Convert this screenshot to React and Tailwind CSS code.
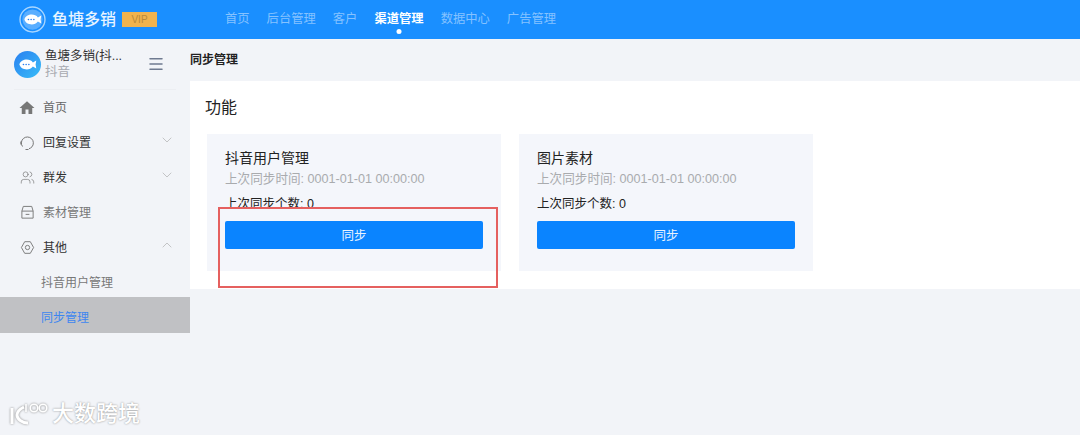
import React from 'react';
import { Users, ChevronDown, ChevronUp, Menu } from 'lucide-react';

const navItems = ['首页', '后台管理', '客户', '渠道管理', '数据中心', '广告管理'];

// small line icons for the side menu
const ReplyIcon = () => (
  <svg width="15" height="16" viewBox="0 0 15 16" fill="none" stroke="#777" strokeWidth="1" className="shrink-0">
    <path d="M2.500 11.500A6 6 0 1 1 12 11.800C11 12.800 10 13.400 9 13.700" />
    <path d="M5.500 14.500h3" />
    <path d="M1 6.500v3" strokeWidth="1.300" />
  </svg>
);

const BoxIcon = () => (
  <svg width="15" height="15" viewBox="0 0 16 16" fill="none" stroke="#777" strokeWidth="1" className="shrink-0">
    <path d="M3.500 1.500h9l1.500 5v7.500H2V6.500z" />
    <path d="M2 6.500h12" />
    <path d="M6 10h4" />
  </svg>
);

const GearIcon = () => (
  <svg width="15" height="15" viewBox="0 0 16 16" fill="none" stroke="#777" strokeWidth="1" className="shrink-0">
    <path d="M5 1.800h6L14.500 8 11 14.200H5L1.500 8z" strokeLinejoin="round" />
    <circle cx="8" cy="8" r="2.300" />
  </svg>
);

const sideItems = [
  { label: '回复设置', icon: <ReplyIcon />, arrow: 'down', dark: true },
  { label: '群发', icon: <Users size={15} strokeWidth={1.1} className="text-[#777] shrink-0" />, arrow: 'down', dark: true },
  { label: '素材管理', icon: <BoxIcon /> },
  { label: '其他', icon: <GearIcon />, arrow: 'up', dark: true },
];

const cards = ['抖音用户管理', '图片素材'];

// fish-bubble logo used in header and sidebar
const FishLogo = ({ size, ring }) => (
  <svg width={size} height={size} viewBox="0 0 40 40" className="shrink-0">
    {ring ? (
      <>
        <circle cx="20" cy="20" r="18.500" fill="none" stroke="#a9d6ff" strokeWidth="2" />
        <circle cx="20" cy="20" r="15" fill="#5aaeff" />
      </>
    ) : (
      <>
        <defs>
          <linearGradient id="fishBg" x1="0" y1="0" x2="1" y2="1">
            <stop offset="0" stopColor="#2a7ff0" />
            <stop offset="1" stopColor="#38bdf8" />
          </linearGradient>
        </defs>
        <circle cx="20" cy="20" r="20" fill="url(#fishBg)" />
      </>
    )}
    <path d="M8 20c2-8 15-10 20-3l5-3-1 6 1 6-5-3c-5 7-18 5-20-3z" fill="#fff" />
    <circle cx="14" cy="20" r="1.200" fill="#2a7ff0" />
    <circle cx="18" cy="20" r="1.200" fill="#2a7ff0" />
    <circle cx="22" cy="20" r="1.200" fill="#2a7ff0" />
  </svg>
);

const SyncCard = ({ title }) => (
  <div className="w-[294px] h-[137px] bg-[#f4f6fb] px-[18px] pt-[15px]">
    <div className="text-[14px] leading-[18px] text-[#222]">{title}</div>
    <div className="mt-[3px] text-[12.6px] leading-[18px] text-[#a9abae]">上次同步时间: 0001-01-01 00:00:00</div>
    <div className="mt-[7px] text-[12.5px] leading-[18px] text-[#222]">上次同步个数: 0</div>
    <button className="block mt-[8px] w-full h-[28px] pt-[3px] rounded-[2px] bg-[#0a84ff] text-[#e8f3ff] text-[12.5px]">同步</button>
  </div>
);

export default function App() {
  return (
    <div
      className="relative w-[1080px] h-[435px] overflow-hidden bg-[#f2f4f8] flex flex-col"
      style={{ fontFamily: '"Liberation Sans", "Noto Sans CJK SC", sans-serif' }}
    >
      <header className="h-[39px] shrink-0 bg-[#1a8fff] flex items-center">
        <div className="w-[225px] pl-[19px] flex items-center shrink-0">
          <FishLogo size={27} ring />
          <span className="ml-[6px] text-[16px] leading-none font-medium text-[#e8f4ff] whitespace-nowrap">鱼塘多销</span>
          <span className="ml-[6px] w-[35px] h-[15px] bg-[#f0b34e] text-[#b98a3a] text-[10px] leading-[15px] text-center">VIP</span>
        </div>
        <nav className="flex gap-[17px] text-[12.3px] leading-none">
          {navItems.map((item) =>
            item === '渠道管理' ? (
              <span key={item} className="relative font-bold text-white">
                {item}
                <span className="absolute left-1/2 -translate-x-1/2 top-[16px] w-[5px] h-[5px] rounded-full bg-white" />
              </span>
            ) : (
              <span key={item} className="text-[#85c2ff]">{item}</span>
            )
          )}
        </nav>
      </header>

      <div className="flex flex-1">
        <aside className="w-[190px] shrink-0">
          <div className="h-[51px] ml-[14px] mr-[14px] border-b border-[#eceef2] flex items-center">
            <FishLogo size={27} />
            <div className="ml-[4px] w-[80px]">
              <div className="text-[12.5px] leading-[16px] text-[#333] whitespace-nowrap">鱼塘多销(抖...</div>
              <div className="text-[12.5px] leading-[16px] text-[#a8aab0]">抖音</div>
            </div>
            <Menu size={18} strokeWidth={2} className="ml-[22px] text-[#6f7a90]" />
          </div>

          <div className="h-[35px] flex items-center pl-[18px] pt-[1px]">
            <svg width="18" height="18" viewBox="0 0 24 24" fill="#777" className="shrink-0">
              <path d="M10 20v-6h4v6h5v-8h3L12 3 2 12h3v8z" />
            </svg>
            <span className="ml-[7px] text-[12px] text-[#666]">首页</span>
          </div>
          {sideItems.map(({ label, icon, arrow, dark }) => (
            <div key={label} className="h-[35px] flex items-center pl-[20px] pr-[15px]">
              {icon}
              <span className={`ml-[8px] text-[12px] flex-1 ${dark ? 'text-[#333]' : 'text-[#777]'}`}>{label}</span>
              {arrow === 'down' && <ChevronDown size={16} strokeWidth={0.8} className="-mt-[5px] text-[#999]" />}
              {arrow === 'up' && <ChevronUp size={16} strokeWidth={0.8} className="-mt-[5px] text-[#999]" />}
            </div>
          ))}
          <div className="h-[32px] flex items-center pl-[41px] pt-[3px] text-[12px] text-[#777]">抖音用户管理</div>
          <div className="h-[36px] flex items-center pl-[41px] pt-[5px] text-[12px] text-[#3d86f0] bg-[#c0c1c4]">同步管理</div>
        </aside>

        <main className="flex-1">
          <div className="h-[42px] flex items-center text-[12px] font-bold text-[#222]">同步管理</div>
          <section className="h-[208px] bg-white pl-[17px] pt-[15px]">
            <div className="-ml-[2px] text-[16px] leading-[24px] text-[#222]">功能</div>
            <div className="mt-[14px] flex gap-[18px]">
              {cards.map((title) => (
                <SyncCard key={title} title={title} />
              ))}
            </div>
          </section>
        </main>
      </div>

      {/* red annotation box over the first card */}
      <div className="absolute left-[218px] top-[207px] w-[280px] h-[81px] border-2 border-[#e5605f]" />

      {/* watermark */}
      <div className="absolute left-[9px] top-[403px] flex items-center text-white [text-shadow:0_0_2px_#888]">
        <svg width="41" height="22" viewBox="0 0 41 22" fill="none" stroke="#fff" strokeWidth="3" className="drop-shadow-[0_0_1px_#888]">
          <path d="M3 5v16" />
          <path d="M15 4c-4 2-7 5-7 8 0 4 5 8 11 8" />
          <path d="M17 1v8" strokeWidth="1.600" />
          <circle cx="25" cy="5" r="3.800" strokeWidth="1.600" />
          <circle cx="34" cy="5" r="3.800" strokeWidth="1.600" />
        </svg>
        <span className="ml-[2px] text-[22px] leading-none font-medium whitespace-nowrap">大数跨境</span>
      </div>
    </div>
  );
}
